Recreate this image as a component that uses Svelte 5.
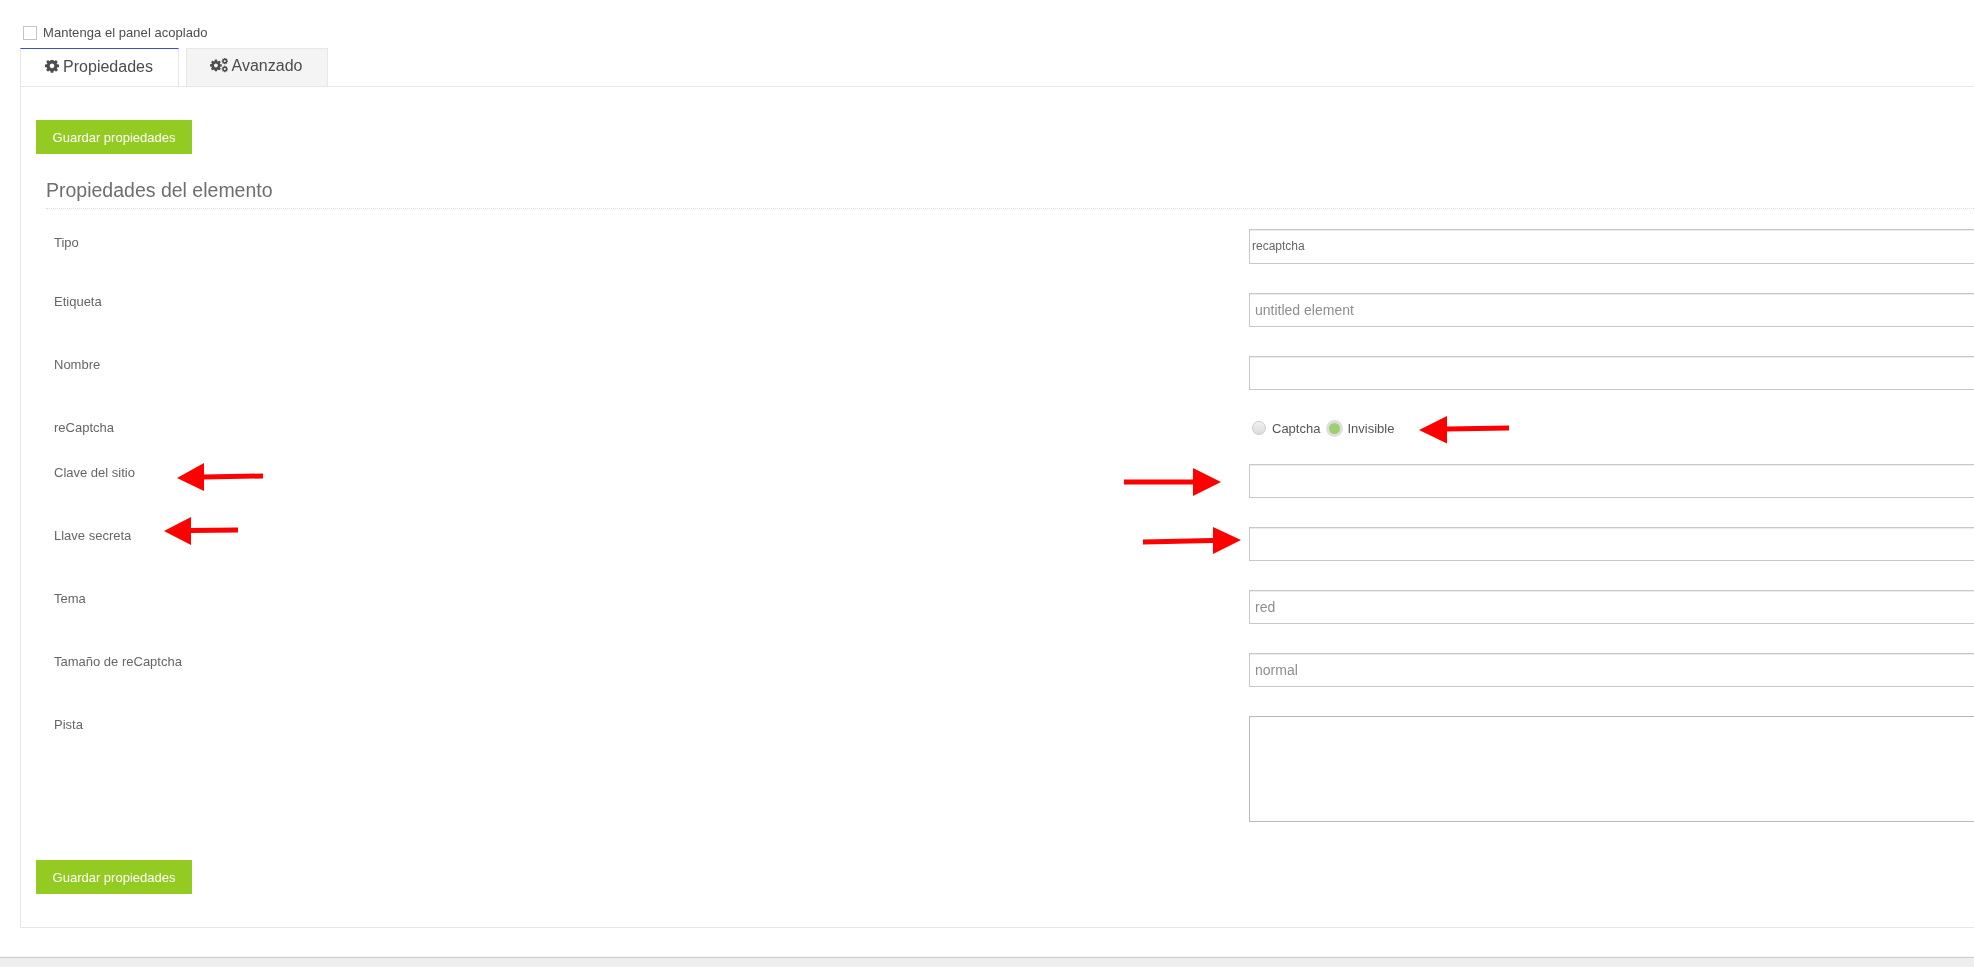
<script>
  // form rows of the element properties panel
  const fields = [
    { label: 'Tipo', type: 'type', value: 'recaptcha' },
    { label: 'Etiqueta', type: 'text', value: 'untitled element' },
    { label: 'Nombre', type: 'text', value: '' },
    { label: 'reCaptcha', type: 'radio' },
    { label: 'Clave del sitio', type: 'text', value: '' },
    { label: 'Llave secreta', type: 'text', value: '' },
    { label: 'Tema', type: 'text', value: 'red' },
    { label: 'Tamaño de reCaptcha', type: 'text', value: 'normal' },
    { label: 'Pista', type: 'area' }
  ];

  // red annotation arrows drawn on top of the screenshot
  const arrows = [
    '1509,425.5 1447,426.5 1447,416 1419,430 1447,443.5 1447,431.5 1509,430.5',
    '1124,479.5 1193,479.5 1193,468 1221,482 1193,496 1193,484.5 1124,484.5',
    '1143,539.5 1213,538 1213,527 1241,540 1213,554 1213,543 1143,544.5',
    '263,473.5 204,474.5 204,463 177,478 204,491 204,479.5 263,478.5',
    '238,527.5 191,528 191,517 164,531 191,545 191,533 238,532.5'
  ];

  const gear = 'M1024 640q0-106-75-181t-181-75-181 75-75 181 75 181 181 75 181-75 75-181zm512-109v222q0 12-8 23t-20 13l-185 28q-19 54-39 91 35 50 107 138 10 12 10 25t-9 23q-27 37-99 108t-94 71q-12 0-26-9l-138-108q-44 23-91 38-16 136-29 186-7 28-36 28h-222q-14 0-24.5-8.5t-11.5-21.5l-28-184q-49-16-90-37l-141 107q-10 9-25 9-14 0-25-11-126-114-165-168-7-10-7-23 0-12 8-23 15-21 51-66.5t54-70.5q-27-50-41-99l-183-27q-13-2-21-12.5t-8-23.5v-222q0-12 8-23t19-13l186-28q14-46 39-92-40-57-107-138-10-12-10-24 0-10 9-23 26-36 98.5-107.5t94.5-71.5q13 0 26 10l138 107q44-23 91-38 16-136 29-186 7-28 36-28h222q14 0 24.5 8.5t11.5 21.5l28 184q49 16 90 37l142-107q9-9 24-9 13 0 25 10 129 119 165 170 7 8 7 22 0 12-8 23-15 21-51 66.5t-54 70.5q26 50 41 98l183 28q13 2 21 12.5t8 23.5z';
</script>

<div class="page">
  <label class="dock">
    <input type="checkbox" />
    <span>Mantenga el panel acoplado</span>
  </label>

  <div class="tabs">
    <div class="tab active">
      <svg class="cog" viewBox="0 0 1536 1536"><path d={gear} fill-rule="evenodd" /></svg>
      Propiedades
    </div>
    <div class="tab">
      <svg class="cogs" viewBox="0 0 1920 1536">
        <path d={gear} fill-rule="evenodd" transform="translate(0 240) scale(.82)" />
        <path d={gear} fill-rule="evenodd" transform="translate(1240 20) scale(.44)" />
        <path d={gear} fill-rule="evenodd" transform="translate(1240 860) scale(.44)" />
      </svg>
      Avanzado
    </div>
  </div>

  <div class="panel">
    <button class="save">Guardar propiedades</button>
    <h3>Propiedades del elemento</h3>

    <div class="form">
      {#each fields as f}
        <div class="row" class:type-row={f.type === 'type'} class:radio-row={f.type === 'radio'}>
          <div class="lbl">{f.label}</div>
          <div>
            {#if f.type === 'radio'}
              <div class="radios">
                <input type="radio" name="captcha" />
                <span class="opt">Captcha</span>
                <input type="radio" name="captcha" class="on" checked />
                <span class="opt last">Invisible</span>
              </div>
            {:else if f.type === 'area'}
              <textarea></textarea>
            {:else}
              <input class="txt" type="text" value={f.value} />
            {/if}
          </div>
        </div>
      {/each}
    </div>

    <button class="save bottom">Guardar propiedades</button>
  </div>

  <div class="footer"></div>

  <svg class="marks" width="1974" height="967">
    {#each arrows as points}
      <polygon {points} fill="#fe0000" />
    {/each}
  </svg>
</div>

<style>
  :global(body) {
    margin: 0;
    background: #fff;
    overflow: hidden;
  }

  .page {
    position: relative;
    height: 967px;
    overflow: hidden;
    will-change: transform;
    font-family: "Liberation Sans", Arial, sans-serif;
    color: #555;
    font-size: 13px;
  }

  .dock {
    display: flex;
    align-items: center;
    gap: 6px;
    height: 14px;
    padding: 26px 0 0 23px;
    color: #4c4c4c;
  }

  .dock span {
    padding-bottom: 2px;
    letter-spacing: 0.05px;
  }

  .dock input {
    appearance: none;
    margin: 0;
    width: 14px;
    height: 14px;
    border: 1px solid #c4c4c4;
    background: #fff;
  }

  .tabs {
    display: flex;
    gap: 7px;
    margin: 8px 0 0 20px;
    height: 38px;
  }

  .tab {
    box-sizing: border-box;
    width: 142px;
    height: 38px;
    display: flex;
    align-items: center;
    justify-content: center;
    gap: 4px;
    font-size: 16px;
    color: #4c4c4c;
    background: #f4f4f4;
    border: 1px solid #e8e8e8;
    border-bottom: 0;
    padding: 0 2px 4px 0;
  }

  .tab.active {
    width: 159px;
    background: #fff;
    border-top: 1px solid #3a53c0;
    border-left: 1px solid #e6e6e6;
    border-right: 1px solid #e6e6e6;
    padding: 0 1px 2px 0;
  }

  .cog {
    width: 14px;
    height: 14px;
    fill: #4c4c4c;
  }

  .cogs {
    width: 18px;
    height: 15px;
    fill: #4c4c4c;
  }

  .panel {
    box-sizing: border-box;
    width: 2200px;
    height: 842px;
    margin-left: 20px;
    padding: 33px 15px 0;
    border: 1px solid #e6e6e6;
  }

  .save {
    display: block;
    width: 156px;
    height: 34px;
    padding: 0;
    border: 0;
    background: #93cb22;
    color: #fff;
    font-family: inherit;
    font-size: 13px;
  }

  .save.bottom {
    margin-top: 38px;
  }

  h3 {
    margin: 24px 0 20px 10px;
    padding-bottom: 6px;
    font-size: 19.5px;
    line-height: 24px;
    font-weight: 400;
    color: #6e6e6e;
    border-bottom: 1px dotted #ddd;
  }

  .form {
    margin-left: 18px;
  }

  .row {
    display: grid;
    grid-template-columns: 1195px 1fr;
    margin-bottom: 29px;
  }

  .type-row .lbl {
    padding-top: 6px;
  }

  .radio-row {
    height: 16px;
  }

  .lbl {
    padding-top: 1px;
    line-height: 16px;
    color: #666;
  }

  .txt {
    display: block;
    box-sizing: border-box;
    width: 100%;
    height: 34px;
    padding: 0 5px;
    border: 1px solid #c8c8c8;
    box-shadow: inset 0 1px 0 #ececec;
    background: #fff;
    color: #8e8e8e;
    font-family: inherit;
    font-size: 14px;
  }

  .type-row .txt {
    height: 35px;
    padding: 0 2px 2px;
    font-size: 12px;
    color: #666;
  }

  textarea {
    display: block;
    box-sizing: border-box;
    width: 100%;
    height: 106px;
    padding: 0;
    border: 1px solid #b8b8b8;
    background: #fff;
    resize: none;
    margin: 0;
  }

  .radios {
    display: flex;
    align-items: center;
    height: 16px;
    margin: 1px 0 0 3px;
  }

  .radios input {
    appearance: none;
    flex: none;
    margin: 0;
    width: 14px;
    height: 14px;
    border-radius: 50%;
    border: 1px solid #c8c8c8;
    background: linear-gradient(#f2f2f2, #dcdcdc);
  }

  .radios input.on {
    box-sizing: border-box;
    width: 17px;
    height: 17px;
    margin-left: 6px;
    border: 3px solid #dedede;
    background: #9ccf6e;
  }

  .opt {
    margin-left: 6px;
    color: #555;
  }

  .opt.last {
    margin-left: 4px;
  }

  .footer {
    height: 9px;
    margin-top: 30px;
    background: #eeeeee;
    box-shadow: 0 -1px 1px #cfcfcf;
  }

  .marks {
    position: absolute;
    top: 0;
    left: 0;
    pointer-events: none;
  }
</style>
